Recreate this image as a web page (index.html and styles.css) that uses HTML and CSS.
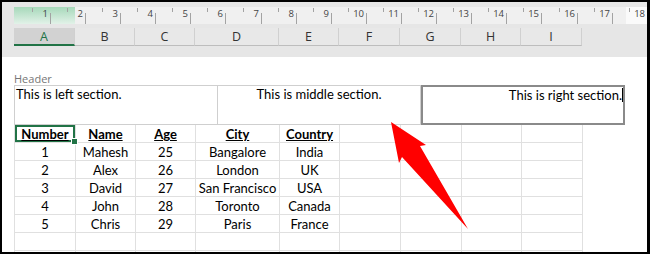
FILE: index.html
```html
<!DOCTYPE html>
<html lang="en">
<head>
  <meta charset="UTF-8">
  <title>Header sections</title>
  <link rel="stylesheet" href="styles.css">
</head>
<body>
  <div class="sheet">
    <div class="top">
      <div class="ruler">
        <svg width="634" height="17" viewBox="0 0 634 17">
          <defs>
            <linearGradient id="sel" x1="0" y1="0" x2="0" y2="1">
              <stop offset="0" stop-color="#a6d8ba"/>
              <stop offset="1" stop-color="#e2f2e8"/>
            </linearGradient>
          </defs>
          <rect x="0" y="0" width="634" height="17" fill="#f0f0f0"/>
          <rect x="0" y="0" width="61" height="17" fill="url(#sel)"/>
          <rect x="612" y="0" width="22" height="17" fill="#fafafa"/>
          <g stroke="#a3a3a3" stroke-width="1">
            <path d="M18.5 1v4M53.5 1v4M88.5 1v4M123.5 1v4M158.5 1v4M193.5 1v4M229.5 1v4M264.5 1v4M299.5 1v4M334.5 1v4M369.5 1v4M404.5 1v4M439.5 1v4M474.5 1v4M509.5 1v4M545.5 1v4M580.5 1v4M615.5 1v4"/>
            <path d="M36.5 6v11M71.5 6v11M106.5 6v11M141.5 6v11M176.5 6v11M211.5 6v11M247.5 6v11M282.5 6v11M317.5 6v11M352.5 6v11M387.5 6v11M422.5 6v11M457.5 6v11M492.5 6v11M527.5 6v11M563.5 6v11M598.5 6v11M633.5 6v11"/>
          </g>
          <g class="ruler-num" text-anchor="end">
            <text x="34" y="10">1</text>
            <text x="69" y="10">2</text>
            <text x="104" y="10">3</text>
            <text x="139" y="10">4</text>
            <text x="174" y="10">5</text>
            <text x="209" y="10">6</text>
            <text x="245" y="10">7</text>
            <text x="280" y="10">8</text>
            <text x="315" y="10">9</text>
            <text x="350" y="10">10</text>
            <text x="385" y="10">11</text>
            <text x="420" y="10">12</text>
            <text x="455" y="10">13</text>
            <text x="490" y="10">14</text>
            <text x="525" y="10">15</text>
            <text x="561" y="10">16</text>
            <text x="596" y="10">17</text>
            <text x="631" y="10">18</text>
          </g>
        </svg>
      </div>
      <div class="cols colheads">
        <div class="colhead current">A</div>
        <div class="colhead">B</div>
        <div class="colhead">C</div>
        <div class="colhead">D</div>
        <div class="colhead">E</div>
        <div class="colhead">F</div>
        <div class="colhead">G</div>
        <div class="colhead">H</div>
        <div class="colhead">I</div>
      </div>
    </div>

    <div class="page">
      <div class="hf-label">Header</div>
      <div class="hf">
        <div class="hf-sec left">This is left section.</div>
        <div class="hf-sec mid">This is middle section.</div>
        <div class="hf-sec right">This is right section.<span class="caret"></span></div>
      </div>

      <div class="cols grid">
        <div class="cell head active">Number</div>
        <div class="cell head">Name</div>
        <div class="cell head">Age</div>
        <div class="cell head">City</div>
        <div class="cell head">Country</div>
        <div class="cell"></div><div class="cell"></div><div class="cell"></div><div class="cell"></div>

        <div class="cell">1</div><div class="cell">Mahesh</div><div class="cell">25</div><div class="cell">Bangalore</div><div class="cell">India</div>
        <div class="cell"></div><div class="cell"></div><div class="cell"></div><div class="cell"></div>

        <div class="cell">2</div><div class="cell">Alex</div><div class="cell">26</div><div class="cell">London</div><div class="cell">UK</div>
        <div class="cell"></div><div class="cell"></div><div class="cell"></div><div class="cell"></div>

        <div class="cell">3</div><div class="cell">David</div><div class="cell">27</div><div class="cell">San Francisco</div><div class="cell">USA</div>
        <div class="cell"></div><div class="cell"></div><div class="cell"></div><div class="cell"></div>

        <div class="cell">4</div><div class="cell">John</div><div class="cell">28</div><div class="cell">Toronto</div><div class="cell">Canada</div>
        <div class="cell"></div><div class="cell"></div><div class="cell"></div><div class="cell"></div>

        <div class="cell">5</div><div class="cell">Chris</div><div class="cell">29</div><div class="cell">Paris</div><div class="cell">France</div>
        <div class="cell"></div><div class="cell"></div><div class="cell"></div><div class="cell"></div>

        <div class="cell"></div><div class="cell"></div><div class="cell"></div><div class="cell"></div><div class="cell"></div>
        <div class="cell"></div><div class="cell"></div><div class="cell"></div><div class="cell"></div>

        <div class="cell"></div><div class="cell"></div><div class="cell"></div><div class="cell"></div><div class="cell"></div>
        <div class="cell"></div><div class="cell"></div><div class="cell"></div><div class="cell"></div>
      </div>
    </div>

    <svg class="arrow" width="650" height="254" viewBox="0 0 650 254">
      <polygon points="391,122 426,145 420,146 468,229 402,157 399,163" fill="#ff0000"/>
    </svg>
  </div>
</body>
</html>
```

FILE: styles.css
```css
* {
  margin: 0;
  padding: 0;
  box-sizing: border-box;
}
body {
  font-family: "Open Sans", sans-serif;
  background: #fff;
}
.sheet {
  width: 650px;
  height: 254px;
  border: 2px solid #000;
  border-right-width: 3px;
  position: relative;
  overflow: hidden;
  background: #fff;
}

/* ruler + column letters */
.top {
  height: 55px;
  background: #e6e6e6;
  padding-left: 12px;
  display: flex;
  flex-direction: column;
}
.ruler {
  margin-top: 5px;
  height: 17px;
}
.ruler svg {
  display: block;
}
.ruler-num {
  font-family: "Open Sans", sans-serif;
  font-size: 9.5px;
  fill: #444;
}
.cols {
  display: grid;
  grid-template-columns: 61px 60px 60px 84px 60px 61px 61px 60px 61px;
  width: 568px;
}
.colheads {
  margin-top: 4px;
}
.colhead {
  height: 18px;
  line-height: 17px;
  text-align: center;
  font-size: 12.5px;
  color: #333;
  background: #e8e8e8;
  border-right: 1px solid #d0d0d0;
  border-bottom: 1px solid #bdbdbd;
}
.colhead.current {
  background: #d2d2d2;
  color: #217346;
  border-bottom: 2px solid #217346;
}

/* page area */
.page {
  padding-left: 12px;
}
.hf-label {
  margin-top: 15px;
  height: 13px;
  line-height: 13px;
  font-size: 11px;
  color: #767676;
}
.hf {
  display: flex;
  height: 40px;
  width: 611px;
  font-family: Lato, "Open Sans", sans-serif;
  font-size: 13px;
  line-height: 16px;
  color: #000;
}
.hf-sec {
  height: 40px;
}
.hf-sec.left {
  width: 203px;
  border: 1px solid #cfcfcf;
  border-right: none;
  padding-left: 1px;
}
.hf-sec.mid {
  width: 204px;
  border: 1px solid #cfcfcf;
  text-align: center;
}
.hf-sec.right {
  width: 204px;
  border: 2px solid #8a8a8a;
  text-align: right;
}
.caret {
  display: inline-block;
  width: 1px;
  height: 14px;
  background: #000;
  vertical-align: -2px;
}

/* cells */
.grid {
  border-left: 1px solid #e0e0e0;
  font-family: Lato, "Open Sans", sans-serif;
  font-size: 13px;
  color: #000;
}
.cell {
  height: 18px;
  line-height: 18px;
  text-align: center;
  border-right: 1px solid #e0e0e0;
  border-bottom: 1px solid #e0e0e0;
  white-space: nowrap;
}
.cell.head {
  font-weight: bold;
  text-decoration: underline;
}
.cell.active {
  position: relative;
  box-shadow: inset 0 0 0 2px #217346;
}
.cell.active::after {
  content: "";
  position: absolute;
  right: -3px;
  bottom: -3px;
  width: 5px;
  height: 5px;
  background: #217346;
  border: 1px solid #fff;
}

.arrow {
  position: absolute;
  top: -2px;
  left: -2px;
  pointer-events: none;
}
```
